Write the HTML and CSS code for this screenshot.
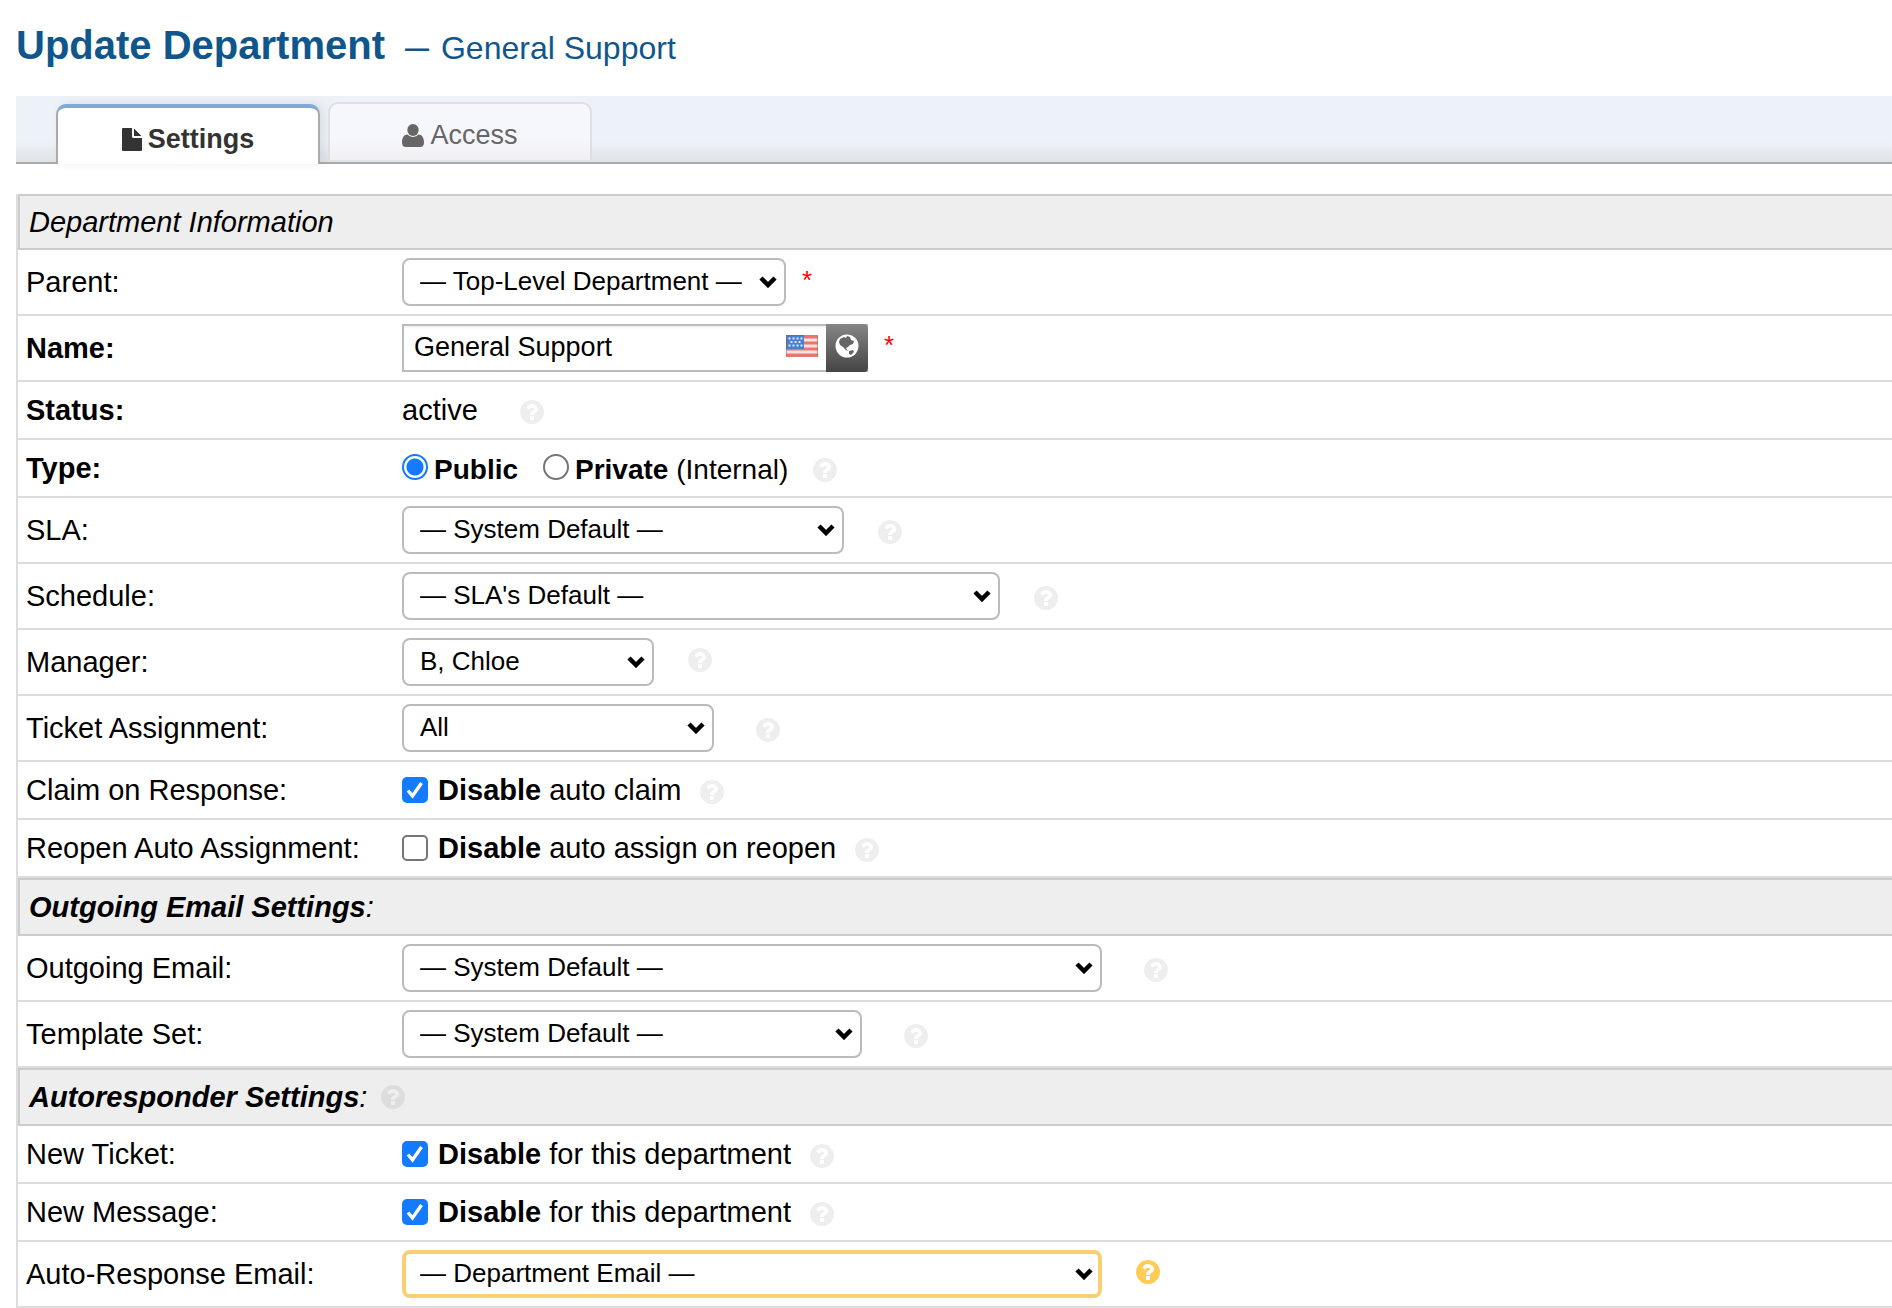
FILE: index.html
```html
<!DOCTYPE html>
<html lang="en">
<head>
<meta charset="utf-8">
<title>Update Department — General Support</title>
<meta name="viewport" content="width=device-width, initial-scale=1">
<link rel="stylesheet" href="styles.css">
</head>
<body>
<svg class="sprite" aria-hidden="true">
  <symbol id="i-help" viewBox="0 0 1536 1536"><path d="M896 1248v-192q0-14-9-23t-23-9h-192q-14 0-23 9t-9 23v192q0 14 9 23t23 9h192q14 0 23-9t9-23zM1152 576q0-88-55.500-163t-138.500-116-170-41q-243 0-371 213-15 24 8 42l132 100q7 6 19 6 16 0 25-12 53-68 86-92 34-24 86-24 48 0 85.500 26t37.500 59q0 38-20 61t-68 45q-63 28-115.500 86.500t-52.500 125.500v36q0 14 9 23t23 9h192q14 0 23-9t9-23q0-19 21.500-49.500t54.500-49.500q32-18 49-28.500t46-35 44.500-48 28-60.500 12.500-81zM1536 768q0 209-103 385.500t-279.500 279.500-385.500 103-385.500-103-279.500-279.500-103-385.500 103-385.500 279.500-279.500 385.500-103 385.500 103 279.500 279.500 103 385.500z"/></symbol>
</svg>
<h1 class="title">Update Department <small class="title-sub"><span class="dash">—</span> General Support</small></h1>
<nav>
  <ul class="tabs">
    <li><a class="tab tab-active" href="#settings"><svg class="icon-file" viewBox="0 0 20 23"><path d="M1 0h9v8.500a1.500 1.500 0 0 0 1.500 1.500H20V22a1 1 0 0 1-1 1H1a1 1 0 0 1-1-1V1a1 1 0 0 1 1-1zM12 0.500L19.500 8H12z"/></svg>Settings</a></li>
    <li><a class="tab" href="#access"><svg class="icon-user" viewBox="0 0 22 23"><ellipse cx="11" cy="6" rx="5.700" ry="6"/><path d="M5.500 10.500C7 12 9 13 11 13s4-1 5.500-2.500C20 10.500 22 14 22 18.500c0 3-1.500 4.500-4 4.500H4c-2.500 0-4-1.500-4-4.500 0-4.500 2-8 5.500-8z"/></svg>Access</a></li>
  </ul>
</nav>
<form id="settings">
<table class="form">
  <tbody>
    <tr><th class="section" colspan="2">Department Information</th></tr>
    <tr>
      <td class="label"><label for="parent">Parent:</label></td>
      <td><div class="field field-tall"><select id="parent" class="w-parent"><option>— Top-Level Department —</option></select><span class="required">*</span></div></td>
    </tr>
    <tr>
      <td class="label"><label for="name"><b>Name:</b></label></td>
      <td><div class="field field-tall">
        <div class="translatable">
          <input id="name" type="text" value="General Support">
          <svg class="flag" viewBox="0 0 32 22"><rect width="32" height="22" fill="#f6e4e2"/><path d="M0 2h32M0 8h32M0 14h32M0 20h32" stroke="#ec7470" stroke-width="3"/><rect width="18" height="14" fill="#4a7fd0"/><path d="M2.500 3.500h14M4.500 7h12M2.500 10.500h14" stroke="#dce9fb" stroke-width="2" stroke-dasharray="2 2"/><rect x=".5" y=".5" width="31" height="21" fill="none" stroke="#b0483f" stroke-opacity=".45"/></svg>
          <button type="button" class="translate" aria-label="Translate"><svg viewBox="0 0 24 24"><circle cx="12" cy="12" r="11.500" fill="#fff"/><path d="M5 5l4-2 2 1 1-2 3 1 1 3 3 1-1 3-3 1-2 2-2 1 2 3-2-1-3-3-3-2-1-3zM14 17l4-1 1 2-3 3-2-1z" fill="#666"/></svg></button>
        </div><span class="required">*</span></div></td>
    </tr>
    <tr>
      <td class="label"><b>Status:</b></td>
      <td><div class="field">active<button type="button" class="help gap-xl" aria-label="Help"><svg><use href="#i-help"/></svg></button></div></td>
    </tr>
    <tr>
      <td class="label"><b>Type:</b></td>
      <td><div class="field"><label class="radio"><input type="radio" name="type" checked><b>Public</b></label><label class="radio"><input type="radio" name="type"><span><b>Private</b> (Internal)</span></label><button type="button" class="help" aria-label="Help"><svg><use href="#i-help"/></svg></button></div></td>
    </tr>
    <tr>
      <td class="label"><label for="sla">SLA:</label></td>
      <td><div class="field field-tall"><select id="sla" class="w-sla"><option>— System Default —</option></select><button type="button" class="help gap-md" aria-label="Help"><svg><use href="#i-help"/></svg></button></div></td>
    </tr>
    <tr>
      <td class="label"><label for="schedule">Schedule:</label></td>
      <td><div class="field field-tall"><select id="schedule" class="w-schedule"><option>— SLA's Default —</option></select><button type="button" class="help gap-md" aria-label="Help"><svg><use href="#i-help"/></svg></button></div></td>
    </tr>
    <tr>
      <td class="label"><label for="manager">Manager:</label></td>
      <td><div class="field field-tall"><select id="manager" class="w-manager"><option>B, Chloe</option></select><button type="button" class="help help-raised gap-md" aria-label="Help"><svg><use href="#i-help"/></svg></button></div></td>
    </tr>
    <tr>
      <td class="label"><label for="assignment">Ticket Assignment:</label></td>
      <td><div class="field field-tall"><select id="assignment" class="w-assignment"><option>All</option></select><button type="button" class="help gap-xl" aria-label="Help"><svg><use href="#i-help"/></svg></button></div></td>
    </tr>
    <tr>
      <td class="label">Claim on Response:</td>
      <td><div class="field"><label class="check"><input type="checkbox" checked><span><b>Disable</b> auto claim</span></label><button type="button" class="help gap-sm" aria-label="Help"><svg><use href="#i-help"/></svg></button></div></td>
    </tr>
    <tr>
      <td class="label">Reopen Auto Assignment:</td>
      <td><div class="field"><label class="check"><input type="checkbox"><span><b>Disable</b> auto assign on reopen</span></label><button type="button" class="help gap-sm" aria-label="Help"><svg><use href="#i-help"/></svg></button></div></td>
    </tr>
  </tbody>
  <tbody>
    <tr><th class="section" colspan="2"><b>Outgoing Email Settings</b>:</th></tr>
    <tr>
      <td class="label"><label for="outgoing">Outgoing Email:</label></td>
      <td><div class="field field-tall"><select id="outgoing" class="w-email"><option>— System Default —</option></select><button type="button" class="help gap-xl" aria-label="Help"><svg><use href="#i-help"/></svg></button></div></td>
    </tr>
    <tr>
      <td class="label"><label for="template">Template Set:</label></td>
      <td><div class="field field-tall"><select id="template" class="w-template"><option>— System Default —</option></select><button type="button" class="help gap-xl" aria-label="Help"><svg><use href="#i-help"/></svg></button></div></td>
    </tr>
  </tbody>
  <tbody>
    <tr><th class="section" colspan="2"><div class="section-row"><span><b>Autoresponder Settings</b>:</span><button type="button" class="help" aria-label="Help"><svg><use href="#i-help"/></svg></button></div></th></tr>
    <tr>
      <td class="label">New Ticket:</td>
      <td><div class="field"><label class="check"><input type="checkbox" checked><span><b>Disable</b> for this department</span></label><button type="button" class="help gap-sm" aria-label="Help"><svg><use href="#i-help"/></svg></button></div></td>
    </tr>
    <tr>
      <td class="label">New Message:</td>
      <td><div class="field"><label class="check"><input type="checkbox" checked><span><b>Disable</b> for this department</span></label><button type="button" class="help gap-sm" aria-label="Help"><svg><use href="#i-help"/></svg></button></div></td>
    </tr>
    <tr>
      <td class="label"><label for="autoresponse">Auto-Response Email:</label></td>
      <td><div class="field field-tall"><select id="autoresponse" class="w-email highlighted"><option>— Department Email —</option></select><button type="button" class="help help-raised help-active gap-md" aria-label="Help"><svg><use href="#i-help"/></svg></button></div></td>
    </tr>
  </tbody>
</table>
</form>
</body>
</html>
```
FILE: styles.css
```css
* { box-sizing: border-box; }

body {
  margin: 0;
  padding-left: 16px;
  background: #fff;
  color: #000;
  font-family: "Liberation Sans", Arial, Helvetica, sans-serif;
  font-size: 29px;
  line-height: 34px;
}

.sprite { display: none; }

/* Heading */
.title {
  display: flex;
  align-items: center;
  gap: 20px;
  margin: 0;
  padding: 21px 0 27px;
  color: #0f568c;
  font-size: 40px;
  line-height: 48px;
}
.title-sub {
  display: flex;
  align-items: center;
  gap: 12px;
  padding-top: 6px;
  font-size: 32px;
  font-weight: normal;
  line-height: 36px;
}
.dash { font-size: 24px; font-weight: bold; }

/* Tabs */
.tabs {
  display: flex;
  align-items: flex-end;
  gap: 8px;
  height: 68px;
  margin: 0 0 30px;
  padding: 0 0 0 40px;
  list-style: none;
  background: linear-gradient(#ecf2f7 70%, #dfe3e8);
  border-bottom: 2px solid #aaa;
}
.tab {
  display: flex;
  align-items: center;
  justify-content: center;
  gap: 6px;
  width: 264px;
  height: 58px;
  margin-bottom: 2px;
  padding-top: 6px;
  border: 2px solid #dfdfe3;
  border-bottom: 0;
  border-radius: 10px 10px 0 0;
  background: linear-gradient(#f6f7fc 60%, #f0f0f4);
  color: #666;
  font-size: 27px;
  text-decoration: none;
}
.tab svg { fill: currentColor; }
.tab-active {
  height: 60px;
  margin-bottom: -2px;
  border-color: #aaa;
  border-top: 4px solid #81a9d7;
  background: #fff;
  box-shadow: 4px -1px 10px rgba(0, 0, 0, .08);
  color: #333;
  font-weight: bold;
}
.icon-file { width: 20px; height: 23px; }
.icon-user { width: 22px; height: 23px; }

/* Form table */
.form {
  width: 100%;
  border-collapse: separate;
  border-spacing: 0;
  border-left: 2px solid #ddd;
}
.form td { padding: 0 8px; border-bottom: 2px solid #ddd; }
.label { width: 376px; }
.section {
  padding: 9px;
  border: 2px solid #ccc;
  border-right: 0;
  background: #eee;
  font-style: italic;
  font-weight: normal;
  text-align: left;
}
tbody + tbody .section { padding: 10px 9px; }
.section-row { display: flex; align-items: center; gap: 14px; }

.field { display: flex; align-items: center; min-height: 56px; }
.field-tall { min-height: 64px; }

/* Controls */
select {
  appearance: none;
  height: 48px;
  margin: 0;
  padding: 0 40px 2px 16px;
  border: 2px solid #bbb;
  border-radius: 8px;
  background: #fff url("data:image/svg+xml,%3Csvg xmlns='http://www.w3.org/2000/svg' width='18' height='12' viewBox='0 0 18 12'%3E%3Cpath d='M2 2l7 7 7-7' fill='none' stroke='%23000' stroke-width='4.500'/%3E%3C/svg%3E") no-repeat right 7px center;
  color: #000;
  font-family: inherit;
  font-size: 26px;
}
.w-parent { width: 384px; }
.w-sla { width: 442px; }
.w-schedule { width: 598px; }
.w-manager { width: 252px; }
.w-assignment { width: 312px; }
.w-email { width: 700px; }
.w-template { width: 460px; }
.highlighted {
  padding-left: 14px;
  border: 4px solid #f9cf72;
  background-position: right 5px center;
}

.translatable {
  display: flex;
  align-items: center;
  width: 466px;
  height: 48px;
  border: 2px solid #bbb;
  border-right: 0;
  box-shadow: inset 0 2px 2px rgba(0, 0, 0, .05);
}
.translatable input {
  flex: 1;
  min-width: 0;
  padding: 0 0 2px 10px;
  border: 0;
  background: none;
  color: #000;
  font-family: inherit;
  font-size: 27px;
}
.flag { width: 32px; height: 22px; margin: 0 8px 4px 0; }
.translate {
  display: grid;
  place-items: center;
  width: 42px;
  height: 48px;
  padding: 0 0 4px;
  border: 0;
  border-radius: 0 4px 4px 0;
  background: linear-gradient(#868686, #444);
}
.translate svg { width: 24px; height: 24px; }

.required {
  margin-left: 16px;
  padding-bottom: 4px;
  color: #f00;
  font-size: 26px;
}
.translatable + .required { padding-bottom: 6px; }

.radio, .check { display: flex; align-items: center; }
.radio { margin-right: 25px; padding-top: 4px; font-size: 28px; }
.radio input, .check input {
  appearance: none;
  width: 26px;
  height: 26px;
  border: 2px solid #767676;
  background: #fff;
}
.radio input { margin: 0 6px 6px 0; border-radius: 50%; }
.radio input:checked {
  border-color: #147aff;
  background: radial-gradient(circle, #147aff 8px, #fff 9px);
}
.check input { margin: 0 10px 0 0; border-radius: 5px; }
.check input:checked {
  border-color: #147aff;
  background: #147aff url("data:image/svg+xml,%3Csvg xmlns='http://www.w3.org/2000/svg' viewBox='0 0 22 22'%3E%3Cpath d='M4 11.500l4.500 5.500L17.500 4' fill='none' stroke='%23fff' stroke-width='3.400'/%3E%3C/svg%3E") center / 22px no-repeat;
}

.help {
  width: 24px;
  height: 24px;
  margin-top: 4px;
  padding: 0;
  border: 0;
  background: none;
  color: #eee;
}
.help svg { display: block; width: 24px; height: 24px; fill: currentColor; }
.help-raised { margin-top: 0; margin-bottom: 4px; }
.help-active { color: #ffcb57; }
.section .help { margin-top: 0; color: #ddd; }
.gap-sm { margin-left: 19px; }
.gap-md { margin-left: 34px; }
.gap-xl { margin-left: 42px; }
```
